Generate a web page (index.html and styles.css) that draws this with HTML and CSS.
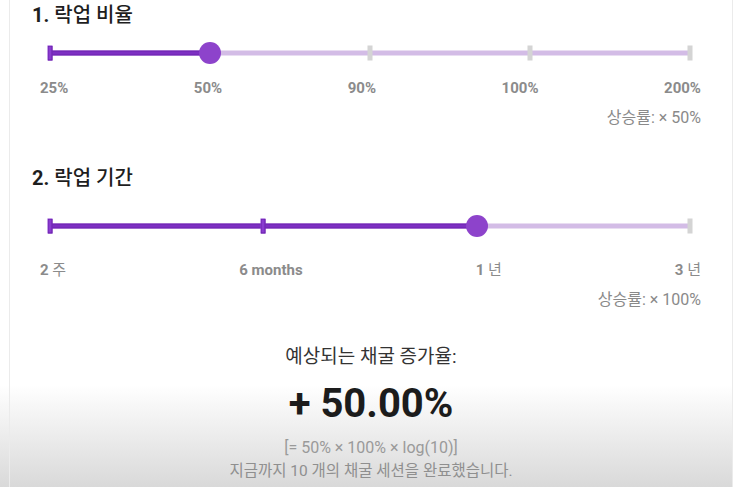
FILE: index.html
```html
<!DOCTYPE html>
<html lang="ko">
<head>
<meta charset="utf-8">
<title>락업</title>
<link rel="stylesheet" href="styles.css">
</head>
<body>
<div class="panel">
  <section class="sec sec1">
    <h2 class="title"><b>1.</b> 락업 비율</h2>
    <div class="slider">
      <div class="track"></div>
      <div class="fill" style="width:25%"></div>
      <span class="tick on" style="left:0%"></span>
      <span class="tick" style="left:50%"></span>
      <span class="tick" style="left:75%"></span>
      <span class="tick" style="left:100%"></span>
      <span class="thumb" style="left:25%"></span>
    </div>
    <div class="labels">
      <span>25%</span><span>50%</span><span>90%</span><span>100%</span><span>200%</span>
    </div>
    <div class="rate">상승률: × 50%</div>
  </section>

  <section class="sec sec2">
    <h2 class="title"><b>2.</b> 락업 기간</h2>
    <div class="slider">
      <div class="track"></div>
      <div class="fill" style="width:66.667%"></div>
      <span class="tick on" style="left:0%"></span>
      <span class="tick on" style="left:33.333%"></span>
      <span class="tick" style="left:100%"></span>
      <span class="thumb" style="left:66.667%"></span>
    </div>
    <div class="labels">
      <span>2 <i>주</i></span><span>6 months</span><span>1 <i>년</i></span><span>3 <i>년</i></span>
    </div>
    <div class="rate">상승률: × 100%</div>
  </section>

  <section class="result">
    <div class="result-head">예상되는 채굴 증가율:</div>
    <div class="result-value">+ 50.00%</div>
    <div class="result-formula">[= 50% × 100% × log(10)]</div>
    <div class="result-note">지금까지 10 개의 채굴 세션을 완료했습니다.</div>
  </section>
</div>
</body>
</html>
```

FILE: styles.css
```css
* { box-sizing: border-box; }

html, body {
  margin: 0;
  padding: 0;
}

body {
  width: 733px;
  height: 487px;
  overflow: hidden;
  font-family: Roboto, "Noto Sans CJK KR", sans-serif;
  background: linear-gradient(to bottom, #ffffff 0px, #ffffff 385px, #d9d9d9 487px);
}

.panel {
  margin-left: 9px;
  width: 724px;
  height: 487px;
  border-left: 1px solid #ebebeb;
  border-right: 1px solid #ebebeb;
  display: flex;
  flex-direction: column;
}

.sec {
  display: flex;
  flex-direction: column;
}

.title {
  margin: 0 0 0 22px;
  font-size: 20px;
  line-height: 24px;
  font-weight: 500;
  color: #1e1e1e;
}

.title b { font-weight: 700; }

.sec1 .title { margin-top: 3px; }
.sec2 .title { margin-top: 38px; }

.slider {
  position: relative;
  margin-left: 40px;
  width: 640px;
  height: 24px;
}

.sec1 .slider { margin-top: 14px; }
.sec2 .slider { margin-top: 24px; }

.track,
.fill {
  position: absolute;
  left: 0;
  top: 50%;
  height: 5px;
  transform: translateY(-50%);
  border-radius: 1px;
}

.track {
  right: 0;
  background: #d3bce6;
}

.fill {
  background: #7d2fc2;
  box-shadow: inset 0 0 0 1px #6c22ad;
}

.tick {
  position: absolute;
  top: 50%;
  width: 5px;
  height: 15px;
  transform: translate(-50%, -50%);
  background: #d4d4d4;
}

.tick.on {
  background: #8a3cd0;
  box-shadow: inset 0 0 0 1px #6a20ab;
}

.thumb {
  position: absolute;
  top: 50%;
  width: 22px;
  height: 22px;
  border-radius: 50%;
  transform: translate(-50%, -50%);
  background: #8d43cb;
}

.labels {
  display: flex;
  justify-content: space-between;
  margin-left: 30px;
  width: 661px;
  font-size: 15px;
  line-height: 20px;
  font-weight: 700;
  color: #8b8b8b;
}

.labels i {
  font-style: normal;
  font-weight: 400;
}

.sec1 .labels { margin-top: 13px; }
.sec2 .labels { margin-top: 22px; }

.rate {
  margin-top: 10px;
  width: 691px;
  text-align: right;
  font-size: 16px;
  line-height: 20px;
  color: #8a8a8a;
}

.result {
  display: flex;
  flex-direction: column;
  align-items: center;
  text-align: center;
}

.result-head {
  margin-top: 35px;
  font-size: 19px;
  line-height: 24px;
  color: #333333;
}

.result-value {
  margin-top: 11px;
  font-size: 40px;
  line-height: 48px;
  font-weight: 700;
  color: #1c1c1c;
}

.result-formula {
  margin-top: 10px;
  font-size: 16px;
  line-height: 20px;
  color: #9a9a9a;
}

.result-note {
  margin-top: 3px;
  font-size: 15.5px;
  line-height: 20px;
  color: #8f8f8f;
}
```
